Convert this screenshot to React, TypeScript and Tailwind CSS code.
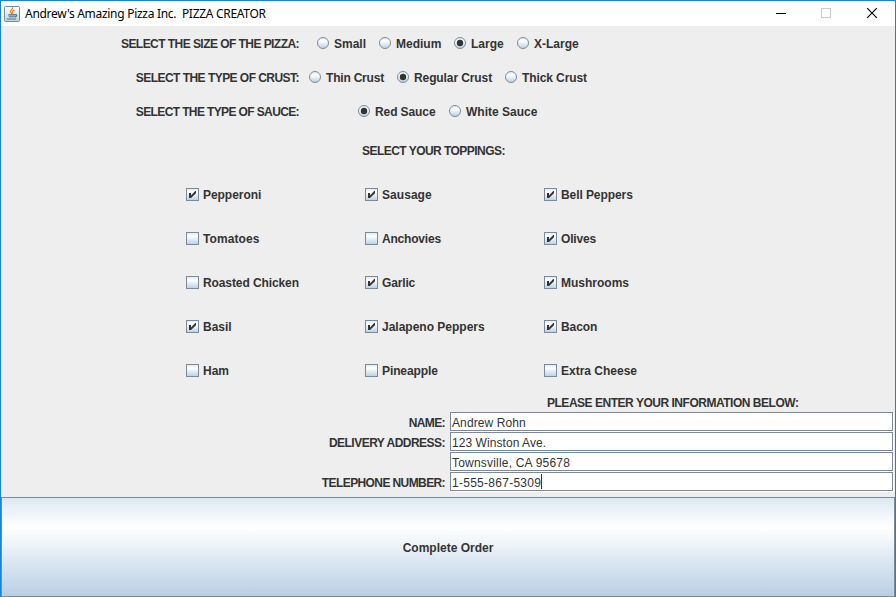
import React from "react";

const FONT = "font-['Liberation_Sans',Arial,sans-serif]";

type Option = { label: string; on?: boolean; w: string; track?: string };

function Radio({ label, on, w, track = "" }: Option) {
  return (
    <div className={`flex h-full shrink-0 items-center ${w}`}>
      <svg width="12" height="12" viewBox="0 0 12 12" className="mr-[5px] shrink-0">
        <circle cx="6" cy="6" r="5.5" fill="url(#ocean)" stroke="#7a8a99" />
        {on && <circle cx="6" cy="6" r="3.2" fill="#333333" />}
      </svg>
      <span className={`pt-[2px] ${track}`}>{label}</span>
    </div>
  );
}

function Check({ label, on, track }: { label: string; on: boolean; track: string }) {
  return (
    <div className="flex h-11 items-center pt-px">
      <svg width="13" height="13" viewBox="0 0 13 13" className="mr-1 shrink-0">
        <rect x="0.5" y="0.5" width="12" height="12" fill="url(#ocean)" stroke="#7a8a99" />
        {on && <path fill="#333333" d="M3 5h2v2.400L9.200 3h.8v2.200L5 10H3z" />}
      </svg>
      <span className={`pt-px ${track}`}>{label}</span>
    </div>
  );
}

function Row({ title, track, gap, options }: { title: string; track: string; gap: string; options: Option[] }) {
  return (
    <div className="flex h-[34px] items-center">
      <div className={`w-[298px] shrink-0 pt-[2px] text-right ${track}`}>{title}</div>
      <div className={`flex h-full ${gap}`}>
        {options.map((o) => (
          <Radio key={o.label} {...o} />
        ))}
      </div>
    </div>
  );
}

const toppings: [string, boolean, string][] = [
  ["Pepperoni", true, "tracking-[-0.05px]"],
  ["Sausage", true, "tracking-[0.05px]"],
  ["Bell Peppers", true, "tracking-[-0.08px]"],
  ["Tomatoes", false, "tracking-[0.1px]"],
  ["Anchovies", false, "tracking-[-0.2px]"],
  ["Olives", true, "tracking-[-0.15px]"],
  ["Roasted Chicken", false, "tracking-[-0.1px]"],
  ["Garlic", true, "tracking-[-0.15px]"],
  ["Mushrooms", true, ""],
  ["Basil", true, ""],
  ["Jalapeno Peppers", true, ""],
  ["Bacon", true, "tracking-[-0.1px]"],
  ["Ham", false, ""],
  ["Pineapple", false, "tracking-[-0.1px]"],
  ["Extra Cheese", false, ""],
];

const fields = [
  { label: "NAME:", value: "Andrew Rohn", labelTrack: "tracking-[-0.6px]", track: "tracking-[0.1px]" },
  { label: "DELIVERY ADDRESS:", value: "123 Winston Ave.", labelTrack: "tracking-[-0.52px]", track: "tracking-[0.06px]" },
  { label: "", value: "Townsville, CA 95678", labelTrack: "", track: "tracking-[0.2px]" },
  { label: "TELEPHONE NUMBER:", value: "1-555-867-5309", labelTrack: "tracking-[-0.6px]", track: "tracking-[0.27px]", caret: true },
];

function TitleBar() {
  return (
    <div className="flex h-[25px] shrink-0 items-center bg-white font-['Noto_Sans',sans-serif] text-[12px] font-normal text-black">
      <svg width="16" height="16" viewBox="0 0 16 16" className="ml-[3px] shrink-0">
        <rect x="0.5" y="0.5" width="15" height="15" rx="1" fill="url(#tile)" stroke="#73899c" />
        <g fill="none" strokeLinecap="round">
          <path d="M8.6 1.8c.8 1.5-2.400 2.200-2.200 3.700.1.900 1 1.300 1 2.300M10.300 4.200c-1.600.6-2.400 1.300-1.700 2.200.4.500.2 1-.3 1.400" stroke="#e9822b" strokeWidth="1.200" />
          <path d="M4.600 8.900h6.300M5.100 10.800h5M3.300 13h8.500M11.200 8.700c2.200-.4 2 1.600-.2 2.200" stroke="#4a7290" strokeWidth="1.100" />
        </g>
      </svg>
      <span className="ml-[5px] whitespace-pre tracking-[-0.29px]">Andrew's Amazing Pizza Inc.  PIZZA CREATOR</span>
      <svg width="102" height="13" viewBox="0 0 102 13" className="mr-[17px] ml-auto">
        <path d="M0 6.500h10" stroke="#000" shapeRendering="crispEdges" />
        <rect x="45.500" y="1.500" width="9" height="9" fill="none" stroke="#cccccc" shapeRendering="crispEdges" />
        <path d="M91.200 1.200l9.600 9.600M100.800 1.200l-9.600 9.600" stroke="#000" strokeWidth="1.200" />
      </svg>
    </div>
  );
}

export default function App() {
  return (
    <div className={`flex h-[597px] w-[896px] flex-col overflow-hidden border-x border-t border-[#1883d7] bg-[#eeeeee] ${FONT} text-[12px] leading-[14px] font-bold whitespace-nowrap text-[#333333]`}>
      <svg width="0" height="0" className="absolute">
        <defs>
          <linearGradient id="ocean" x1="0" y1="0" x2="0" y2="1">
            <stop offset="0" stopColor="#dde8f3" />
            <stop offset="0.3" stopColor="#ffffff" />
            <stop offset="1" stopColor="#b8cfe5" />
          </linearGradient>
          <linearGradient id="tile" x1="0" y1="0" x2="0" y2="1">
            <stop offset="0" stopColor="#ffffff" />
            <stop offset="1" stopColor="#c5d2dc" />
          </linearGradient>
        </defs>
      </svg>
      <TitleBar />
      <div className="h-[102px] shrink-0">
        <Row
          title="SELECT THE SIZE OF THE PIZZA:"
          track="tracking-[-0.55px]"
          gap="ml-[18px]"
          options={[
            { label: "Small", w: "w-[62px]" },
            { label: "Medium", w: "w-[75px]" },
            { label: "Large", on: true, w: "w-[63px]" },
            { label: "X-Large", w: "w-[70px]" },
          ]}
        />
        <Row
          title="SELECT THE TYPE OF CRUST:"
          track="tracking-[-0.54px]"
          gap="ml-[10px]"
          options={[
            { label: "Thin Crust", w: "w-[88px]", track: "tracking-[-0.2px]" },
            { label: "Regular Crust", on: true, w: "w-[108px]", track: "tracking-[-0.1px]" },
            { label: "Thick Crust", w: "w-[90px]", track: "tracking-[-0.1px]" },
          ]}
        />
        <Row
          title="SELECT THE TYPE OF SAUCE:"
          track="tracking-[-0.62px]"
          gap="ml-[59px]"
          options={[
            { label: "Red Sauce", on: true, w: "w-[91px]", track: "tracking-[-0.1px]" },
            { label: "White Sauce", w: "w-[100px]" },
          ]}
        />
      </div>
      <div className="flex h-11 shrink-0 items-center pt-[2px] pl-[361px] tracking-[-0.54px]">SELECT YOUR TOPPINGS:</div>
      <div className="grid h-[220px] shrink-0 grid-cols-[179px_179px_179px] pl-[185px]">
        {toppings.map(([label, on, track]) => (
          <Check key={label} label={label} on={on} track={track} />
        ))}
      </div>
      <div className="flex h-5 shrink-0 items-center pt-px pl-[546px] tracking-[-0.48px]">PLEASE ENTER YOUR INFORMATION BELOW:</div>
      <div className="flex h-[85px] shrink-0 flex-col gap-px">
        {fields.map((f) => (
          <div key={f.value} className="flex h-[19px] items-center">
            <div className={`w-[444px] shrink-0 pt-[2px] text-right ${f.labelTrack}`}>{f.label}</div>
            <div className="ml-[5px] flex h-[19px] w-[443px] items-center border border-[#7a8a99] bg-white pt-[2px] pl-px font-normal shadow-[1px_1px_0_#ffffff]">
              <span className={f.track}>{f.value}</span>
              {f.caret && <span className="-mt-[2px] h-[15px] w-px bg-[#333333]" />}
            </div>
          </div>
        ))}
      </div>
      <button className="h-[100px] shrink-0 border border-[#7a8a99] bg-[linear-gradient(#dde8f3_0%,#ffffff_30%,#b8cfe5_100%)] pt-[2px]">
        Complete Order
      </button>
    </div>
  );
}
